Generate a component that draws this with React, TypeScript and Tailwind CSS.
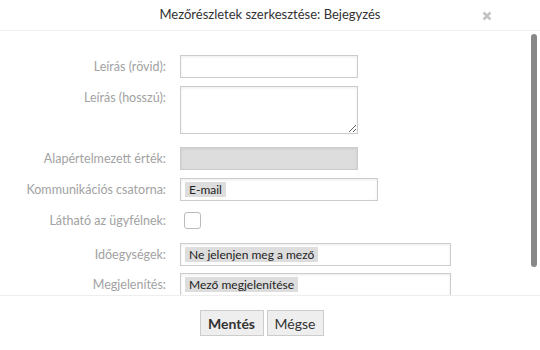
import React from "react";

const font = { fontFamily: "Lato, 'Noto Sans', sans-serif" };

const Label: React.FC<{ text: string; top?: boolean }> = ({ text, top }) => (
  <div
    className={`w-[166px] shrink-0 text-right text-[12.5px] leading-4 text-[#a2a2a2] ${
      top ? "pt-[4px] self-start" : ""
    }`}
  >
    {text}
  </div>
);

const Tag: React.FC<{ text: string }> = ({ text }) => (
  <span className="inline-block bg-[#ddd] px-[4px] text-[12px] leading-[15px] text-[#222]">
    {text}
  </span>
);

const inputCls =
  "border border-[#ccc] bg-white shadow-[inset_0_1px_3px_rgba(0,0,0,0.08)]";

export default function App() {
  return (
    <div className="w-[540px] h-[350px] bg-white flex flex-col overflow-hidden" style={font}>
      <div className="relative h-[31px] shrink-0 border-b border-[#eee] flex items-center justify-center">
        <span className="text-[13px] text-[#333]">
          Mezőrészletek szerkesztése: Bejegyzés
        </span>
        <svg
          className="absolute left-[482px] top-[11px]"
          width="10"
          height="10"
          viewBox="0 0 10 10"
        >
          <path d="M1.5 1.5L8.5 8.5M8.5 1.5L1.5 8.5" stroke="#c4c4c4" strokeWidth="2.6" />
        </svg>
      </div>

      <div className="relative flex-1 overflow-hidden">
        <div className="absolute left-[531px] top-[3px] w-[6px] h-[233px] rounded-full bg-[#888]" />
        <div className="flex flex-col pt-[24px]">
          <div className="flex items-center gap-[14px]">
            <Label text="Leírás (rövid):" />
            <div className={`w-[178px] h-[23px] ${inputCls}`} />
          </div>

          <div className="flex items-center gap-[14px] mt-[8px]">
            <Label text="Leírás (hosszú):" top />
            <textarea
              className={`w-[178px] h-[48px] resize outline-none ${inputCls}`}
              readOnly
            />
          </div>

          <div className="flex items-center gap-[14px] mt-[13px]">
            <Label text="Alapértelmezett érték:" />
            <div className="w-[178px] h-[23px] border border-[#ccc] bg-[#ddd] shadow-[inset_0_1px_3px_rgba(0,0,0,0.08)]" />
          </div>

          <div className="flex items-center gap-[14px] mt-[8px]">
            <Label text="Kommunikációs csatorna:" />
            <div className={`w-[198px] h-[23px] flex items-center px-[4px] ${inputCls}`}>
              <Tag text="E-mail" />
            </div>
          </div>

          <div className="flex items-center gap-[14px] mt-[11px]">
            <Label text="Látható az ügyfélnek:" />
            <div className="ml-[4px] w-[17px] h-[17px] rounded-[3px] border border-[#bbb] bg-white" />
          </div>

          <div className="flex items-center gap-[14px] mt-[14px]">
            <Label text="Időegységek:" />
            <div className={`w-[271px] h-[23px] flex items-center px-[4px] ${inputCls}`}>
              <Tag text="Ne jelenjen meg a mező" />
            </div>
          </div>

          <div className="flex items-center gap-[14px] mt-[7px]">
            <Label text="Megjelenítés:" />
            <div className={`w-[271px] h-[23px] flex items-center px-[4px] ${inputCls}`}>
              <Tag text="Mező megjelenítése" />
            </div>
          </div>
        </div>
      </div>

      <div className="h-[55px] shrink-0 border-t border-[#eee] flex justify-center items-start pt-[14px] pr-[17px] gap-[3px]">
        <button className="h-[26px] w-[64px] border border-[#ccc] bg-[#eee] text-[14px] font-bold text-[#333]">
          Mentés
        </button>
        <button className="h-[26px] w-[57px] border border-[#ccc] bg-[#eee] text-[14px] text-[#333]">
          Mégse
        </button>
      </div>
    </div>
  );
}
